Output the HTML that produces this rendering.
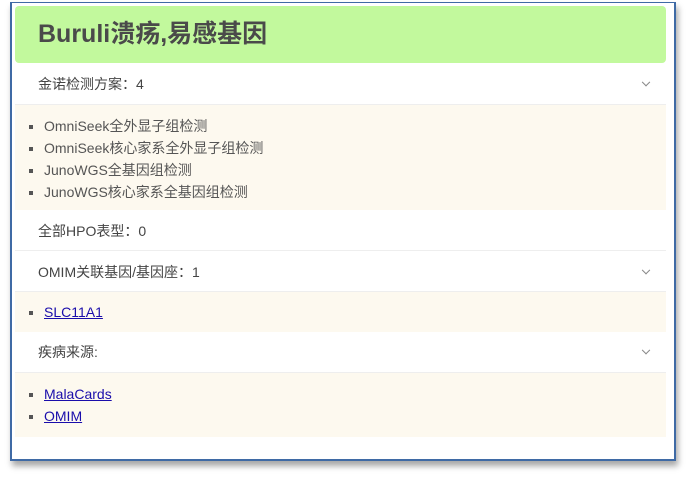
<!DOCTYPE html>
<html><head><meta charset="utf-8"><style>
body{margin:0;width:686px;height:478px;background:#fff;font-family:"Liberation Sans","Noto Sans CJK SC",sans-serif;overflow:hidden}
.frame{position:absolute;left:10px;top:2px;width:662px;height:456px;border:2px solid #3f6aa5;border-top:1px solid #3f6aa5;box-shadow:2px 5px 6px rgba(0,0,0,.35);background:#fff}
.hd{position:absolute;left:15px;top:6px;width:651px;height:57px;background:#c2f99d;border-radius:4px;color:#4a4a4a;font-weight:bold;font-size:25px;line-height:57px;padding-left:23px;box-sizing:border-box}
.row{position:absolute;left:15px;width:651px;background:#fff;font-size:14px;color:#444;padding-left:23px;box-sizing:border-box;border-bottom:1px solid #eee}
.chev{position:absolute;right:17px;top:50%;width:5px;height:5px;border-right:1.5px solid #888;border-bottom:1.5px solid #888;transform:translateY(-80%) rotate(45deg)}
.ls{position:absolute;left:15px;width:651px;background:#fdf9ef;margin:0;padding:0 0 0 29px;box-sizing:border-box;list-style:square;font-size:14px;color:#555;line-height:22px}
.ls li::marker{font-size:13px;color:#555}
.ls a{color:#1a0dab}
</style></head><body>
<div class="frame"></div>
<div class="hd">Buruli溃疡,易感基因</div>
<div class="row" style="top:63px;height:42px;line-height:42px">金诺检测方案：4<span class="chev"></span></div>
<ul class="ls" style="top:105px;height:105px;padding-top:10px"><li>OmniSeek全外显子组检测</li><li>OmniSeek核心家系全外显子组检测</li><li>JunoWGS全基因组检测</li><li>JunoWGS核心家系全基因组检测</li></ul>
<div class="row" style="top:212px;height:39px;line-height:39px">全部HPO表型：0</div>
<div class="row" style="top:252px;height:40px;line-height:40px">OMIM关联基因/基因座：1<span class="chev"></span></div>
<ul class="ls" style="top:292px;height:40px;padding-top:9px"><li><a href="#">SLC11A1</a></li></ul>
<div class="row" style="top:332px;height:41px;line-height:41px">疾病来源:<span class="chev"></span></div>
<ul class="ls" style="top:373px;height:64px;padding-top:10px"><li><a href="#">MalaCards</a></li><li><a href="#">OMIM</a></li></ul>
</body></html>
